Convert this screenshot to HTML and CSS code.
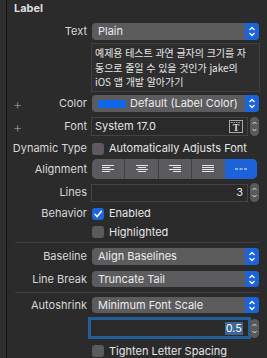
FILE: index.html
```html
<!DOCTYPE html>
<html lang="ko">
<head>
    <meta charset="UTF-8">
    <meta name="viewport" content="width=device-width, initial-scale=1.0">
    <title>Label Inspector</title>
    <link rel="stylesheet" href="styles.css">
</head>
<body>

    <div class="edge"></div>

    <div class="inspector">
        <div class="section-title">Label</div>

        <div class="row row-text">
            <span class="name">Text</span>
            <div class="popup">
                <span class="popup-value">Plain</span>
                <span class="popup-arrows"><svg width="14" height="17" viewBox="0 0 14 17"><path d="M4.5 7 L7 4.5 L9.5 7 M4.5 10 L7 12.5 L9.5 10" fill="none" stroke="#fff" stroke-width="1.3"/></svg></span>
            </div>
        </div>

        <div class="row row-area">
            <span class="name"></span>
            <div class="text-area">예제용 테스트 과연 글자의 크기를 자<br>동으로 줄일 수 있을 것인가 jake의<br>iOS 앱 개발 알아가기</div>
        </div>

        <div class="row row-color">
            <span class="name"><span class="plus">+</span>Color</span>
            <div class="popup">
                <span class="popup-value"><span class="swatch"></span>Default (Label Color)</span>
                <span class="popup-arrows"><svg width="14" height="17" viewBox="0 0 14 17"><path d="M4.5 7 L7 4.5 L9.5 7 M4.5 10 L7 12.5 L9.5 10" fill="none" stroke="#fff" stroke-width="1.3"/></svg></span>
            </div>
        </div>

        <div class="row row-font">
            <span class="name"><span class="plus">+</span>Font</span>
            <div class="field-group">
                <div class="field">
                    <span>System 17.0</span>
                    <svg class="font-icon" width="14" height="13" viewBox="0 0 14 13">
                        <rect x="0.5" y="0.5" width="13" height="12" fill="none" stroke="#a8a8a8"/>
                        <path d="M2 2.5 H12" stroke="#a8a8a8" stroke-dasharray="1.5 1"/>
                        <text x="7" y="11" text-anchor="middle" font-family="Liberation Serif, serif" font-weight="bold" font-size="10" fill="#d0d0d0">T</text>
                    </svg>
                </div>
                <span class="stepper"><svg width="9" height="19" viewBox="0 0 9 19"><path d="M2.5 7 L4.5 5 L6.5 7 M2.5 12 L4.5 14 L6.5 12" fill="none" stroke="#e0e0e0" stroke-width="1"/></svg></span>
            </div>
        </div>

        <div class="row row-check row-dynamic">
            <span class="name">Dynamic Type</span>
            <label class="check"><span class="box"></span>Automatically Adjusts Font</label>
        </div>

        <div class="row row-align">
            <span class="name">Alignment</span>
            <div class="segments">
                <span class="segment"><svg width="14" height="8" viewBox="0 0 14 8"><path d="M1 0.5 H13 M1 2.5 H9 M1 4.5 H13 M1 6.5 H9" stroke="#e6e6e6" stroke-width="1"/></svg></span>
                <span class="segment"><svg width="14" height="8" viewBox="0 0 14 8"><path d="M1 0.5 H13 M3 2.5 H11 M1 4.5 H13 M3 6.5 H11" stroke="#e6e6e6" stroke-width="1"/></svg></span>
                <span class="segment"><svg width="14" height="8" viewBox="0 0 14 8"><path d="M1 0.5 H13 M5 2.5 H13 M1 4.5 H13 M5 6.5 H13" stroke="#e6e6e6" stroke-width="1"/></svg></span>
                <span class="segment"><svg width="14" height="8" viewBox="0 0 14 8"><path d="M1 0.5 H13 M1 2.5 H13 M1 4.5 H13 M1 6.5 H13" stroke="#e6e6e6" stroke-width="1"/></svg></span>
                <span class="segment selected"><svg width="14" height="8" viewBox="0 0 14 8"><path d="M1 4 H13" stroke="#fff" stroke-width="1" stroke-dasharray="3 1.5"/></svg></span>
            </div>
        </div>

        <div class="row row-lines">
            <span class="name">Lines</span>
            <div class="field-group">
                <div class="field number">3</div>
                <span class="stepper"><svg width="9" height="19" viewBox="0 0 9 19"><path d="M2.5 7 L4.5 5 L6.5 7 M2.5 12 L4.5 14 L6.5 12" fill="none" stroke="#e0e0e0" stroke-width="1"/></svg></span>
            </div>
        </div>

        <div class="row row-check row-enabled">
            <span class="name">Behavior</span>
            <label class="check"><span class="box checked"><svg width="12" height="12" viewBox="0 0 12 12"><path d="M3 6.3 L5.2 8.6 L9.2 3.4" fill="none" stroke="#fff" stroke-width="1.6" stroke-linecap="round" stroke-linejoin="round"/></svg></span>Enabled</label>
        </div>

        <div class="row row-check row-highlighted">
            <span class="name"></span>
            <label class="check"><span class="box"></span>Highlighted</label>
        </div>

        <div class="divider"></div>

        <div class="row row-baseline">
            <span class="name">Baseline</span>
            <div class="popup">
                <span class="popup-value">Align Baselines</span>
                <span class="popup-arrows"><svg width="14" height="17" viewBox="0 0 14 17"><path d="M4.5 7 L7 4.5 L9.5 7 M4.5 10 L7 12.5 L9.5 10" fill="none" stroke="#fff" stroke-width="1.3"/></svg></span>
            </div>
        </div>

        <div class="row row-break">
            <span class="name">Line Break</span>
            <div class="popup">
                <span class="popup-value">Truncate Tail</span>
                <span class="popup-arrows"><svg width="14" height="17" viewBox="0 0 14 17"><path d="M4.5 7 L7 4.5 L9.5 7 M4.5 10 L7 12.5 L9.5 10" fill="none" stroke="#fff" stroke-width="1.3"/></svg></span>
            </div>
        </div>

        <div class="divider divider-second"></div>

        <div class="row row-shrink">
            <span class="name">Autoshrink</span>
            <div class="popup">
                <span class="popup-value">Minimum Font Scale</span>
                <span class="popup-arrows"><svg width="14" height="17" viewBox="0 0 14 17"><path d="M4.5 7 L7 4.5 L9.5 7 M4.5 10 L7 12.5 L9.5 10" fill="none" stroke="#fff" stroke-width="1.3"/></svg></span>
            </div>
        </div>

        <div class="row row-scale">
            <span class="name"></span>
            <div class="field-group">
                <div class="field number focused"><span class="selection">0.5</span></div>
                <span class="stepper"><svg width="9" height="19" viewBox="0 0 9 19"><path d="M2.5 7 L4.5 5 L6.5 7 M2.5 12 L4.5 14 L6.5 12" fill="none" stroke="#e0e0e0" stroke-width="1"/></svg></span>
            </div>
        </div>

        <div class="row row-check row-tighten">
            <span class="name"></span>
            <label class="check"><span class="box"></span>Tighten Letter Spacing</label>
        </div>
    </div>

</body>
</html>
```

FILE: styles.css
```css
body {
    margin: 0;
    display: flex;
    height: 358px;
    overflow: hidden;
    background-color: #2b2b2b;
    font-family: Inter, "Liberation Sans", sans-serif;
    font-size: 11px;
    line-height: 13px;
    color: #e4e4e4;
}

.edge {
    width: 6px;
    background-color: #2e2e30;
    border-right: 1px solid #121212;
}

.inspector {
    flex: 1;
    padding: 2px 8px 0 0;
}

.section-title {
    height: 13px;
    padding-left: 7px;
    font-weight: bold;
    color: #dedede;
}

.row {
    display: grid;
    grid-template-columns: 80px 1fr;
    column-gap: 5px;
    align-items: center;
    height: 17px;
    margin-top: 5px;
}

.name {
    display: flex;
    justify-content: flex-end;
    align-items: center;
    color: #d8d8d8;
    white-space: nowrap;
}

.plus {
    margin-right: auto;
    padding-left: 6px;
    font-size: 14px;
    font-weight: 300;
    color: #8e8e8e;
}

/* popup buttons */
.popup {
    display: flex;
    height: 17px;
    border-radius: 4px;
    overflow: hidden;
    background-color: #5c5c5e;
}

.popup-value {
    flex: 1;
    display: flex;
    align-items: center;
    padding-left: 6px;
    color: #ececec;
    white-space: nowrap;
}

.popup-arrows {
    width: 14px;
    background-color: #1b63da;
}

.popup-arrows svg {
    display: block;
}

.swatch {
    width: 28px;
    height: 8px;
    margin-right: 4px;
    background-color: #0f66e6;
}

/* text area */
.text-area {
    box-sizing: border-box;
    height: 49px;
    margin-left: -1px;
    margin-right: -1px;
    padding: 2px 0 0 3px;
    border: 1px solid #404040;
    background-color: #2e2e2e;
    font-family: "Noto Sans CJK KR", Inter, sans-serif;
    font-size: 10px;
    letter-spacing: -0.05px;
    line-height: 14.5px;
    color: #e6e6e6;
    white-space: nowrap;
}

/* text fields with stepper */
.field-group {
    display: flex;
    align-items: center;
    gap: 2px;
}

.field {
    box-sizing: border-box;
    flex: 1;
    display: flex;
    align-items: center;
    justify-content: space-between;
    height: 18px;
    margin-left: -1px;
    padding: 0 4px 0 3px;
    border: 1px solid #444;
    background-color: #2a2a2a;
    color: #e6e6e6;
}

.field.number {
    justify-content: flex-end;
}

.field.focused {
    height: 16px;
    border-color: #2a2a2a;
    box-shadow: 0 0 0 3px #225e98;
}

.selection {
    padding: 0 1px;
    background-color: #3c6694;
    color: #fff;
}

.stepper {
    width: 9px;
    height: 19px;
    border-radius: 5px;
    background-color: #5a5a5c;
}

.stepper svg {
    display: block;
}

.font-icon {
    display: block;
}

/* checkboxes */
.check {
    display: flex;
    align-items: center;
    height: 12px;
    color: #e6e6e6;
    white-space: nowrap;
}

.box {
    width: 12px;
    height: 12px;
    margin-right: 5px;
    border-radius: 3px;
    background-color: #5b5b5d;
}

.box.checked {
    background-color: #1b64dd;
}

.box svg {
    display: block;
}

/* segmented control */
.segments {
    display: flex;
    height: 20px;
    margin-right: 2px;
    border-radius: 5px;
    overflow: hidden;
    background-color: #5b5b5d;
}

.segment {
    flex: 1;
    display: flex;
    align-items: center;
    justify-content: center;
    border-left: 1px solid #404040;
}

.segment:first-child {
    border-left: none;
}

.segment.selected {
    border-left: none;
    background-color: #1c63db;
}

.divider {
    height: 1px;
    margin: 4px 0 0 8px;
    background-color: #3f3f3f;
}

/* vertical rhythm */
.row-text { margin-top: 8px; }
.row-area { height: 49px; margin-top: 3px; }
.row-color { margin-top: 3px; }
.row-font { height: 19px; }
.row-font .field { height: 19px; }
.row-check { height: 12px; }
.row-dynamic { margin-top: 6px; }
.row-align { height: 20px; margin-top: 5px; }
.row-lines { height: 18px; margin-top: 4px; }
.row-enabled { margin-top: 6px; }
.row-highlighted { margin-top: 7px; }
.row-baseline { margin-top: 5px; }
.row-break { height: 16px; margin-top: 6px; }
.row-break .popup { height: 16px; }
.divider-second { margin-top: 5px; }
.row-shrink { height: 16px; margin-top: 4px; }
.row-shrink .popup { height: 16px; }
.row-scale { height: 22px; margin-top: 4px; }
.row-tighten { margin-top: 6px; }
```
